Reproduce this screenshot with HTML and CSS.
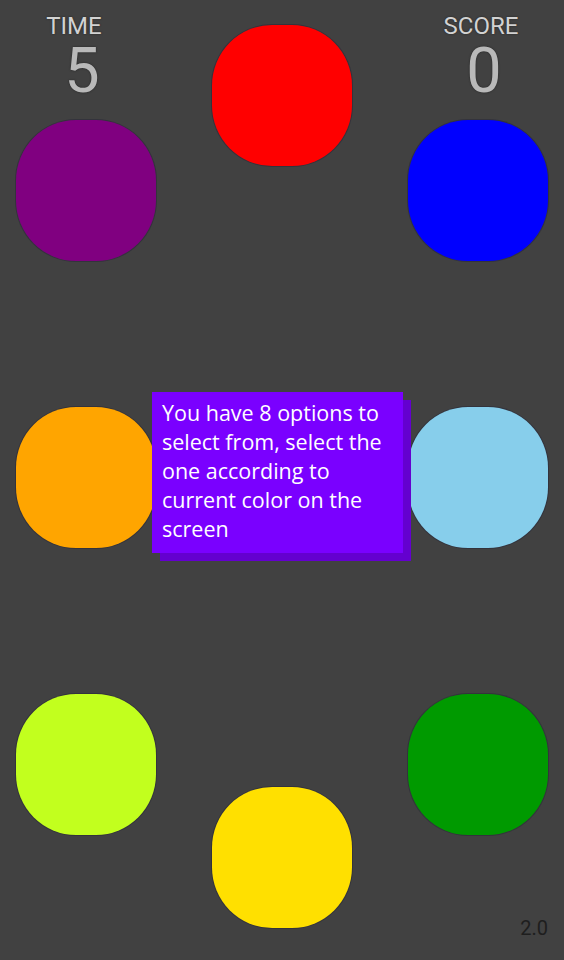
FILE: index.html
```html
<!DOCTYPE html>
<html>
<head>
<meta charset="utf-8">
<link rel="stylesheet" href="styles.css">
</head>
<body>
<div class="board">
  <div class="col side">
    <div class="blob purple"></div>
    <div class="blob orange"></div>
    <div class="blob lime"></div>
  </div>
  <div class="col mid">
    <div class="blob red"></div>
    <div class="blob yellow"></div>
  </div>
  <div class="col side">
    <div class="blob blue"></div>
    <div class="blob sky"></div>
    <div class="blob green"></div>
  </div>

  <div class="stat stat-time">
    <div class="stat-label">TIME</div>
    <div class="stat-value">5</div>
  </div>
  <div class="stat stat-score">
    <div class="stat-label">SCORE</div>
    <div class="stat-value">0</div>
  </div>

  <div class="tip">You have 8 options to select from, select the one according to current color on the screen</div>

  <div class="version">2.0</div>
</div>
</body>
</html>
```

FILE: styles.css
```css
html, body {
  margin: 0;
  padding: 0;
  background: #414141;
}
.board {
  position: relative;
  width: 564px;
  height: 960px;
  overflow: hidden;
  box-sizing: border-box;
  padding: 0 16px;
  display: flex;
  justify-content: space-between;
  font-family: Roboto, "Liberation Sans", sans-serif;
}
.col {
  display: flex;
  flex-direction: column;
}
.side {
  padding-top: 120px;
  gap: 146px;
}
.mid {
  padding-top: 25px;
  gap: 621px;
}
.blob {
  width: 140px;
  height: 141px;
  border-radius: 43%;
  box-sizing: border-box;
  box-shadow: 0 0 0 1px rgba(20, 20, 50, 0.3);
}
.red { background: #ff0000; }
.purple { background: #800080; }
.blue { background: #0000ff; }
.orange { background: #ffa500; }
.sky { background: #87ceeb; }
.lime { background: #c2ff1e; }
.green { background: #009a00; }
.yellow { background: #ffe000; }

.stat {
  position: absolute;
  top: 14px;
  width: 100px;
  text-align: center;
}
.stat-time { left: 24px; }
.stat-score { left: 431px; }
.stat-label {
  font-size: 24px;
  line-height: 24px;
  color: #d2d2d2;
  text-shadow: 0 0 2px #222;
}
.stat-value {
  margin-top: 9px;
  font-size: 63px;
  line-height: 48px;
  color: #b9b9b9;
  text-shadow: 0 0 2px #222;
}
.stat-time .stat-value { padding-left: 16px; }
.stat-score .stat-value { padding-left: 6px; }

.tip {
  position: absolute;
  left: 152px;
  top: 392px;
  width: 251px;
  height: 161px;
  box-sizing: border-box;
  padding: 6px 6px 0 10px;
  background: #7a00ff;
  box-shadow: 8px 8px 0 #6400cf;
  color: #ffffff;
  font-family: "Open Sans", sans-serif;
  font-size: 21.5px;
  line-height: 29px;
}
.version {
  position: absolute;
  right: 16px;
  bottom: 20px;
  font-size: 20px;
  color: #1e1e1e;
}
```
